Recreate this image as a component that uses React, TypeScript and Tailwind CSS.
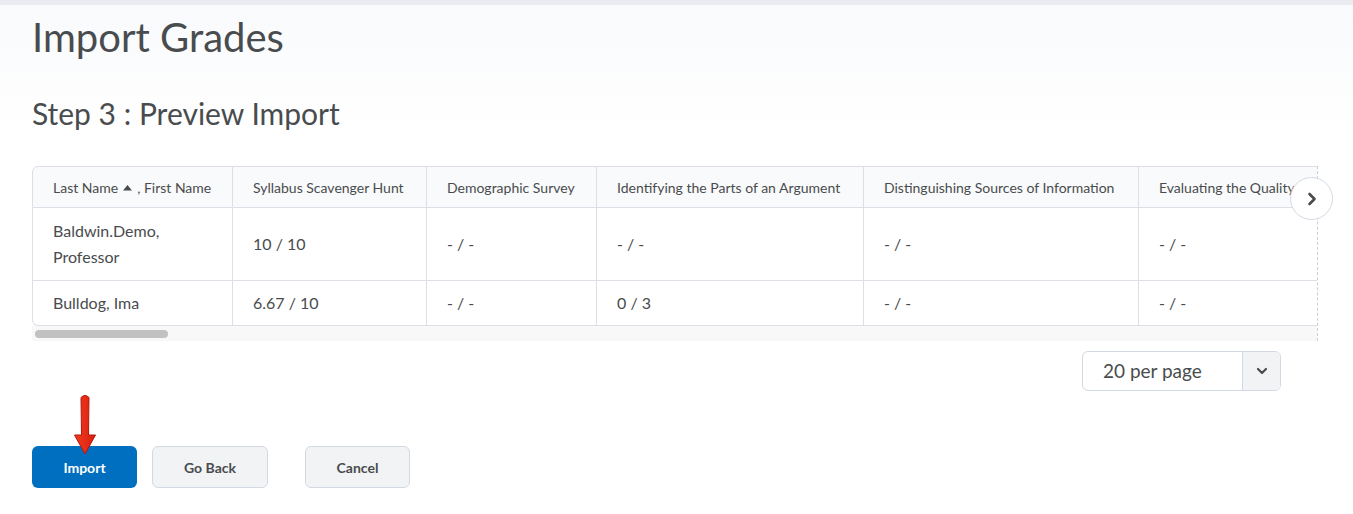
import React from "react";

const cols = [
  { title: "Syllabus Scavenger Hunt", w: 194 },
  { title: "Demographic Survey", w: 170 },
  { title: "Identifying the Parts of an Argument", w: 267 },
  { title: "Distinguishing Sources of Information", w: 275 },
  { title: "Evaluating the Quality of Information", w: 260 },
];

const rows = [
  { name: ["Baldwin.Demo,", "Professor"], grades: ["10 / 10", "- / -", "- / -", "- / -", "- / -"], h: "h-[73px]" },
  { name: ["Bulldog, Ima"], grades: ["6.67 / 10", "- / -", "0 / 3", "- / -", "- / -"], h: "h-[45px]" },
];

function RedArrow() {
  return (
    <svg width="30" height="64" viewBox="0 0 30 64" className="absolute left-[38px] top-[-53px]">
      <defs>
        <linearGradient id="ra" x1="0" x2="1">
          <stop offset="0" stopColor="#f23b1f" />
          <stop offset="1" stopColor="#d81f10" />
        </linearGradient>
      </defs>
      <path
        d="M11 4.5 Q15 0.5 19 4.5 L18.5 42 L25.5 42 L15 61 L4.5 42 L11.5 42 Z"
        fill="url(#ra)"
        stroke="#b3170b"
        strokeWidth="1"
        strokeLinejoin="round"
      />
    </svg>
  );
}

export default function App() {
  return (
    <div className="min-h-screen bg-white text-[#494c4e]" style={{ fontFamily: "Lato, 'Open Sans', sans-serif" }}>
      <div className="h-[5px] bg-[#e9ebf1]" />
      <div className="bg-gradient-to-b from-[#f9fafc] to-white px-8 pt-[6px]">
        <h1 className="text-[40px] leading-[52px]">Import Grades</h1>
        <h2 className="mt-[32px] text-[30px] leading-[36px]">Step 3 : Preview Import</h2>
      </div>

      <div className="px-8 pt-[35px]">
        <div className="relative w-[1286px] border-r border-dashed border-[#c9ced8]">
          <div className="overflow-hidden">
            <table className="table-fixed border-separate border-spacing-0 w-max">
              <thead>
                <tr className="h-[42px] bg-[#f9fafb] text-[14px]">
                  <th className="w-[201px] whitespace-nowrap rounded-tl-[6px] border border-[#dcdfe6] px-5 text-left font-normal">
                    <span className="inline-flex items-center">
                      Last Name
                      <svg width="11" height="7" viewBox="0 0 11 7" className="mx-[4px]">
                        <path d="M1 6.5 L5.5 1 L10 6.5 Z" fill="#494c4e" />
                      </svg>
                      , First Name
                    </span>
                  </th>
                  {cols.map((c) => (
                    <th
                      key={c.title}
                      style={{ width: c.w }}
                      className="whitespace-nowrap border-y border-r border-[#dcdfe6] px-5 text-left font-normal"
                    >
                      {c.title}
                    </th>
                  ))}
                </tr>
              </thead>
              <tbody className="text-[16px]">
                {rows.map((r, i) => (
                  <tr key={i} className={r.h}>
                    <td
                      className={`border-x border-b border-[#dcdfe6] px-5 leading-[26px] ${
                        i === rows.length - 1 ? "rounded-bl-[6px]" : ""
                      }`}
                    >
                      {r.name.map((n) => (
                        <div key={n}>{n}</div>
                      ))}
                    </td>
                    {r.grades.map((g, j) => (
                      <td key={j} className="border-b border-r border-[#dcdfe6] px-5">
                        {g}
                      </td>
                    ))}
                  </tr>
                ))}
              </tbody>
            </table>
          </div>
          <div className="flex h-[15px] items-center bg-[#f8f8f8] pl-[3px]">
            <div className="h-[8px] w-[133px] rounded-full bg-[#c1c1c1]" />
          </div>
          <button className="absolute right-[-16px] top-[11px] flex h-[43px] w-[43px] items-center justify-center rounded-full border border-[#d3d9e3] bg-white">
            <svg width="12" height="14" viewBox="0 0 12 14">
              <path d="M3.5 2 L8.5 7 L3.5 12" fill="none" stroke="#494c4e" strokeWidth="2.6" strokeLinecap="round" strokeLinejoin="round" />
            </svg>
          </button>
        </div>

        <div className="mt-[10px] flex w-[1286px] justify-end pr-[37px]">
          <div className="flex h-[40px] w-[199px] overflow-hidden rounded-[6px] border border-[#d3d9e3] bg-white">
            <div className="flex flex-1 items-center pl-5 text-[19px]">20 per page</div>
            <div className="flex w-[38px] items-center justify-center border-l border-[#d3d9e3] bg-[#f1f3f5]">
              <svg width="12" height="8" viewBox="0 0 12 8">
                <path d="M2 2 L6 6 L10 2" fill="none" stroke="#494c4e" strokeWidth="2.2" strokeLinecap="round" strokeLinejoin="round" />
              </svg>
            </div>
          </div>
        </div>

        <div className="relative mt-[55px] flex items-center text-[14px] font-bold">
          <RedArrow />
          <button className="h-[42px] w-[105px] rounded-[6px] bg-[#006fbf] text-white">Import</button>
          <button className="ml-[15px] h-[42px] w-[116px] rounded-[6px] border border-[#d3d9e3] bg-[#f1f3f5]">Go Back</button>
          <button className="ml-[37px] h-[42px] w-[105px] rounded-[6px] border border-[#d3d9e3] bg-[#f1f3f5]">Cancel</button>
        </div>
      </div>
    </div>
  );
}
